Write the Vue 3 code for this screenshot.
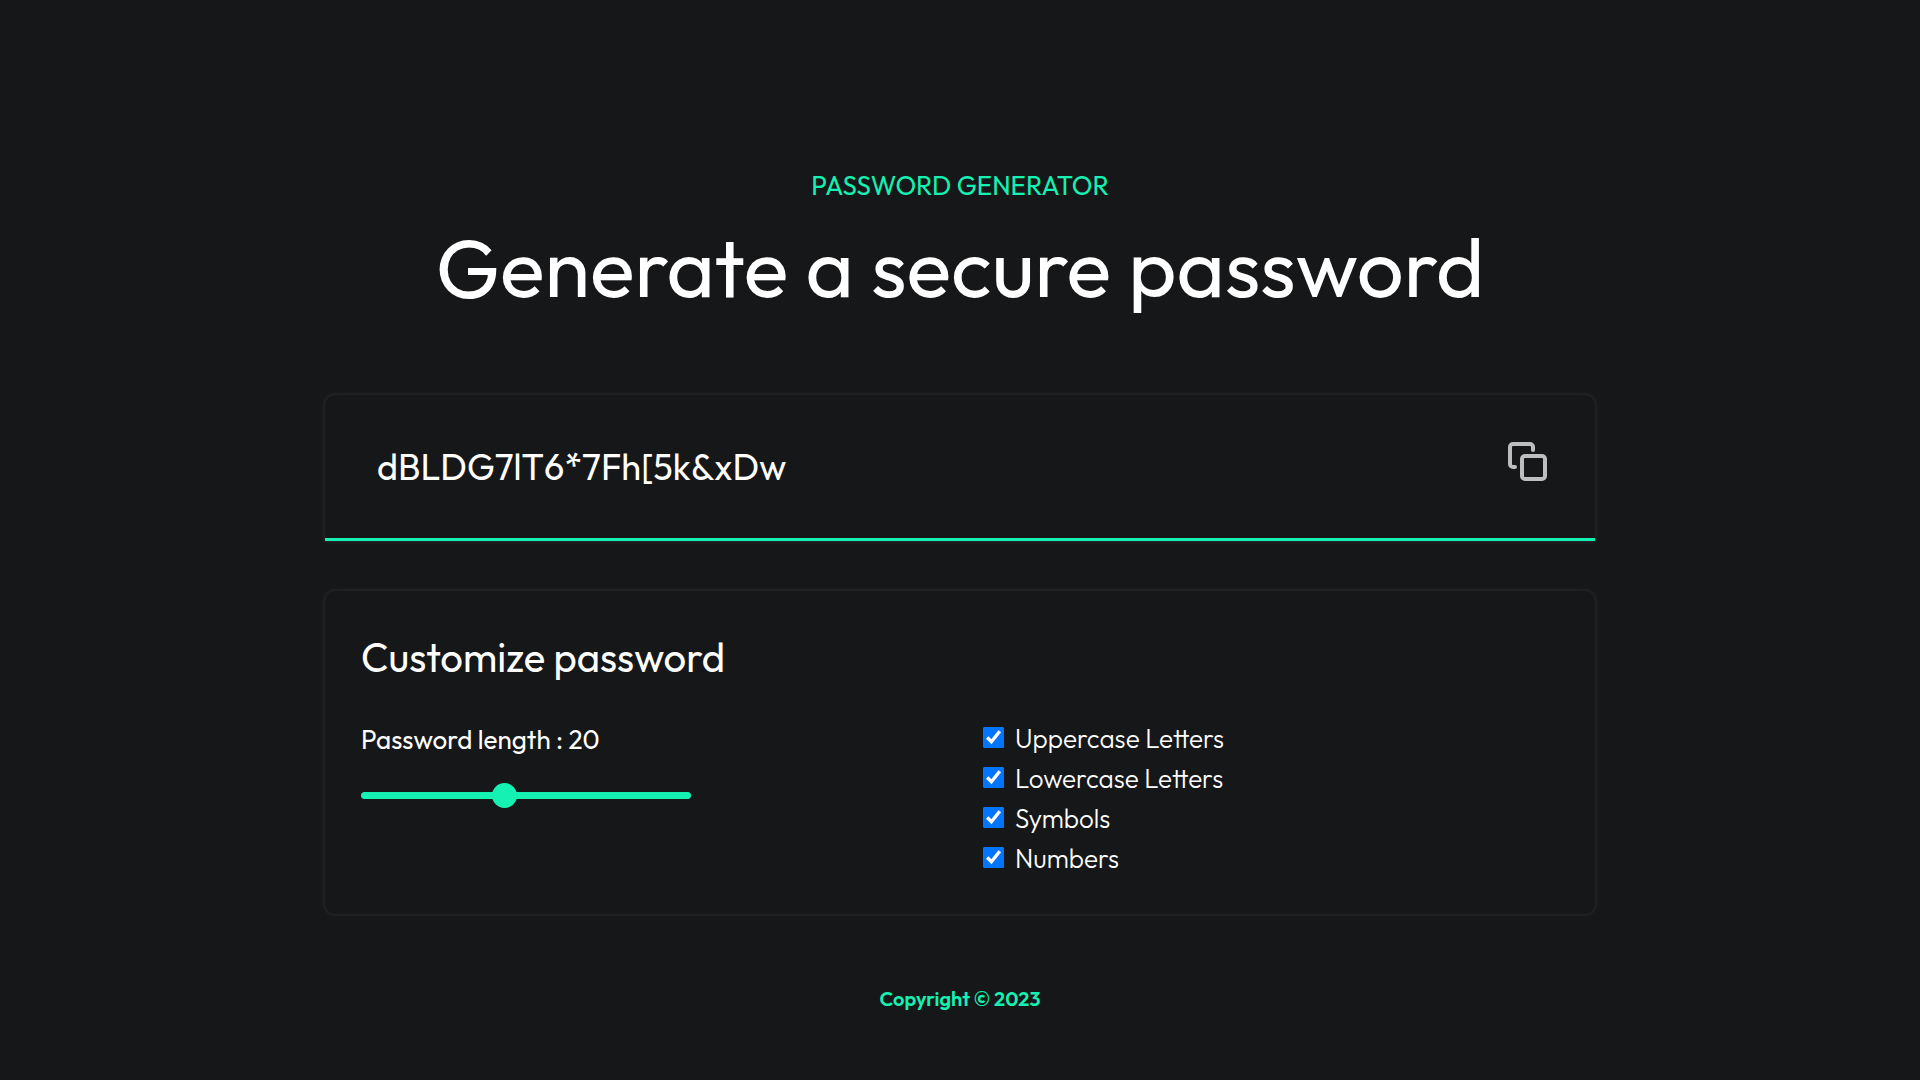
<script setup>
import { computed, ref } from 'vue'

const password = ref('dBLDG7lT6*7Fh[5k&xDw')
const length = ref(20)
const options = ref([
  { id: 'uppercase', label: 'Uppercase Letters', checked: true, chars: 'ABCDEFGHIJKLMNOPQRSTUVWXYZ' },
  { id: 'lowercase', label: 'Lowercase Letters', checked: true, chars: 'abcdefghijklmnopqrstuvwxyz' },
  { id: 'symbols', label: 'Symbols', checked: true, chars: '!@#$%^&*()[]{}' },
  { id: 'numbers', label: 'Numbers', checked: true, chars: '0123456789' },
])

const pool = computed(() => options.value.filter((o) => o.checked).map((o) => o.chars).join(''))

function generate() {
  let next = ''
  for (let i = 0; i < length.value && pool.value; i++) {
    next += pool.value[Math.floor(Math.random() * pool.value.length)]
  }
  password.value = next
}

function copy() {
  navigator.clipboard?.writeText(password.value)
}
</script>

<template>
  <main class="page">
    <header class="intro">
      <p class="kicker">PASSWORD GENERATOR</p>
      <h1 class="title">Generate a secure password</h1>
    </header>

    <section class="card result">
      <input class="password" type="text" readonly aria-label="Generated password" :value="password" />
      <button class="copy" type="button" aria-label="Copy password" @click="copy">
        <svg viewBox="0 0 40 40" width="40" height="40" fill="none" stroke="#bebebe" stroke-width="4" stroke-linecap="round" stroke-linejoin="round">
          <rect x="14" y="14" width="23" height="23" rx="3" />
          <path d="M25 8V5a3 3 0 0 0-3-3H5a3 3 0 0 0-3 3v17a3 3 0 0 0 3 3h2" />
        </svg>
      </button>
    </section>

    <section class="card customize">
      <h2 class="subtitle">Customize password</h2>
      <div class="columns">
        <div class="column">
          <label class="length" for="length">Password length : {{ length }}</label>
          <input id="length" v-model.number="length" class="slider" type="range" min="5" max="40" @input="generate" />
        </div>
        <div class="column options">
          <div v-for="option in options" :key="option.id" class="option">
            <input :id="option.id" v-model="option.checked" class="check" type="checkbox" @change="generate" />
            <label :for="option.id">{{ option.label }}</label>
          </div>
        </div>
      </div>
    </section>

    <footer class="footer">Copyright © 2023</footer>
  </main>
</template>

<style>
body {
  background: #161719;
}
</style>

<style scoped>
.page {
  box-sizing: border-box;
  max-width: 1318px;
  margin: 0 auto;
  padding: 168px 24px 60px;
  color: #fff;
  font-family: Outfit, Lato, sans-serif;
}
.intro {
  text-align: center;
}
.kicker {
  margin: 0;
  color: #14f1b2;
  font-size: 26px;
  line-height: 36px;
}
.title {
  margin: 11px 0 76px;
  font-size: 83px;
  font-weight: 400;
  line-height: 104px;
}
.card {
  box-sizing: border-box;
  border-radius: 10px;
  box-shadow: 0 0 5px rgba(255, 255, 255, 0.12);
}
.result {
  display: flex;
  align-items: center;
  justify-content: space-between;
  height: 146px;
  padding: 0 47px 0 52px;
  border-bottom: 3px solid #14f1b2;
  border-radius: 10px 10px 0 0;
}
.password {
  flex: 1;
  min-width: 0;
  padding: 0;
  border: 0;
  outline: 0;
  background: transparent;
  color: #fff;
  font-family: inherit;
  font-size: 36px;
  line-height: 48px;
}
.copy {
  display: flex;
  margin-bottom: 10px;
  padding: 0;
  border: 0;
  background: transparent;
  cursor: pointer;
}
.customize {
  margin-top: 50px;
  padding: 40px 36px 35px;
}
.subtitle {
  margin: 0 0 36px;
  font-size: 40px;
  font-weight: 400;
  line-height: 52px;
}
.columns {
  display: flex;
}
.column {
  display: flex;
  flex: 0 0 622px;
  flex-direction: column;
  align-items: flex-start;
}
.options {
  flex: 1;
}
.length {
  font-size: 26px;
  line-height: 42px;
}
.slider {
  width: 330px;
  height: 7px;
  margin: 31px 0 0;
  border-radius: 4px;
  background: #14f1b2;
  appearance: none;
}
.slider::-webkit-slider-thumb {
  width: 25px;
  height: 25px;
  border-radius: 50%;
  background: #14f1b2;
  appearance: none;
}
.option {
  display: flex;
  align-items: center;
  gap: 11px;
  font-size: 26px;
  font-weight: 300;
  line-height: 40px;
}
.check {
  width: 21px;
  height: 21px;
  margin: 0 0 4px;
}
.footer {
  margin-top: 71px;
  color: #14f1b2;
  font-size: 20px;
  font-weight: 600;
  line-height: 28px;
  text-align: center;
}
</style>
